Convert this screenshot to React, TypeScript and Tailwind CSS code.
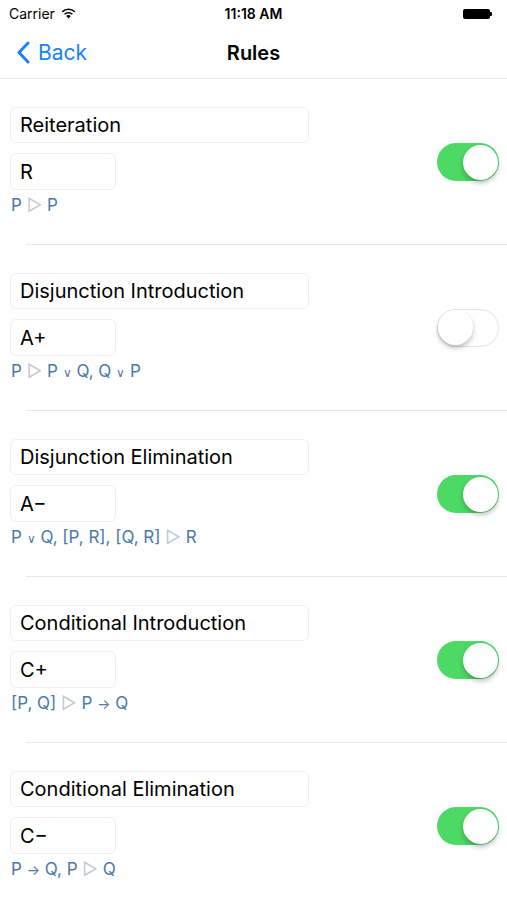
import React from "react";

interface Rule {
    name: string;
    short: string;
    premises: React.ReactNode;
    conclusion: React.ReactNode;
    enabled: boolean;
}

// small "or" glyph as it appears in the app
const Or = () => <span className="text-[12px]">∨</span>;
const To = () => <span className="text-[14px]">→</span>;

const rules: Rule[] = [
    { name: "Reiteration", short: "R", premises: "P", conclusion: "P", enabled: true },
    {
        name: "Disjunction Introduction",
        short: "A+",
        premises: "P",
        conclusion: <>P <Or /> Q, Q <Or /> P</>,
        enabled: false,
    },
    {
        name: "Disjunction Elimination",
        short: "A−",
        premises: <>P <Or /> Q, [P, R], [Q, R]</>,
        conclusion: "R",
        enabled: true,
    },
    {
        name: "Conditional Introduction",
        short: "C+",
        premises: "[P, Q]",
        conclusion: <>P <To /> Q</>,
        enabled: true,
    },
    {
        name: "Conditional Elimination",
        short: "C−",
        premises: <>P <To /> Q, P</>,
        conclusion: "Q",
        enabled: true,
    },
];

function Toggle({ on }: { on: boolean }) {
    // iOS style switch, scaled up a bit to match the screenshot
    return (
        <div
            className={
                on
                    ? "relative h-[38px] w-[62px] rounded-full bg-[#4cd964]"
                    : "relative h-[38px] w-[62px] rounded-full border-[1.5px] border-[#e3e3e3] bg-white"
            }
        >
            <div
                className={
                    on
                        ? "absolute right-[1.5px] top-[1.5px] h-[35px] w-[35px] rounded-full bg-white shadow-[0_3px_5px_rgba(0,0,0,0.25)]"
                        : "absolute left-0 top-0 h-[35px] w-[35px] rounded-full bg-white shadow-[0_3px_5px_rgba(0,0,0,0.25)]"
                }
            />
        </div>
    );
}

function StatusBar() {
    return (
        <div className="relative flex h-[27px] items-center px-[9px] text-[14px] text-black">
            <div className="flex items-center gap-[6px]">
                <span>Carrier</span>
                <svg width="15" height="11" viewBox="0 0 15 11">
                    <path d="M7.5 10.5 L5.2 8 A3.3 3.3 0 0 1 9.8 8 Z" fill="#000" />
                    <path d="M3.6 6.3 A5.6 5.6 0 0 1 11.4 6.3" stroke="#000" strokeWidth="1.6" fill="none" />
                    <path d="M1.2 3.8 A9 9 0 0 1 13.8 3.8" stroke="#000" strokeWidth="1.6" fill="none" />
                </svg>
            </div>
            <span className="absolute left-1/2 -translate-x-1/2 font-semibold">11:18 AM</span>
            <div className="ml-auto flex items-center pr-[6px]">
                <div className="h-[10px] w-[27px] rounded-[2px] bg-black" />
                <div className="h-[4px] w-[2px] rounded-r-[1px] bg-black" />
            </div>
        </div>
    );
}

function NavBar() {
    return (
        <div className="relative flex h-[52px] items-center border-b border-[#e6e6e6] px-[16px]">
            <div className="flex items-center gap-[8px] text-[#1a82fb]">
                <svg width="14" height="23" viewBox="0 0 14 23">
                    <path d="M12 2 L3 11.5 L12 21" stroke="#1a82fb" strokeWidth="3" fill="none" strokeLinecap="round" strokeLinejoin="round" />
                </svg>
                <span className="text-[21px]">Back</span>
            </div>
            <span className="absolute left-1/2 -translate-x-1/2 text-[20px] font-semibold text-black">Rules</span>
        </div>
    );
}

function RuleRow({ rule, last }: { rule: Rule; last: boolean }) {
    return (
        <div className="relative flex h-[166px] items-center pl-[10px] pr-[8px]">
            <div className="flex flex-1 flex-col self-start pt-[28px]">
                <div className="flex h-[36px] w-[299px] items-center rounded-[6px] border border-[#efefef] px-[9px] text-[20px] text-black">
                    {rule.name}
                </div>
                <div className="mt-[10px] flex h-[37px] w-[106px] items-center rounded-[6px] border border-[#efefef] px-[9px] text-[20px] text-black">
                    {rule.short}
                </div>
                <div className="mt-[5px] pl-[1px] text-[17px] leading-[20px] text-[#4a79aa]">
                    {rule.premises} <span className="text-[#bcc9d9]">▷</span> {rule.conclusion}
                </div>
            </div>
            <Toggle on={rule.enabled} />
            {!last && <div className="absolute bottom-0 left-[26px] right-0 h-px bg-[#e8e8e8]" />}
        </div>
    );
}

export default function App() {
    return (
        <div className="min-h-[900px] w-full bg-white font-['Inter',sans-serif]">
            <StatusBar />
            <NavBar />
            {rules.map((rule, i) => (
                <RuleRow key={rule.name} rule={rule} last={i === rules.length - 1} />
            ))}
        </div>
    );
}
